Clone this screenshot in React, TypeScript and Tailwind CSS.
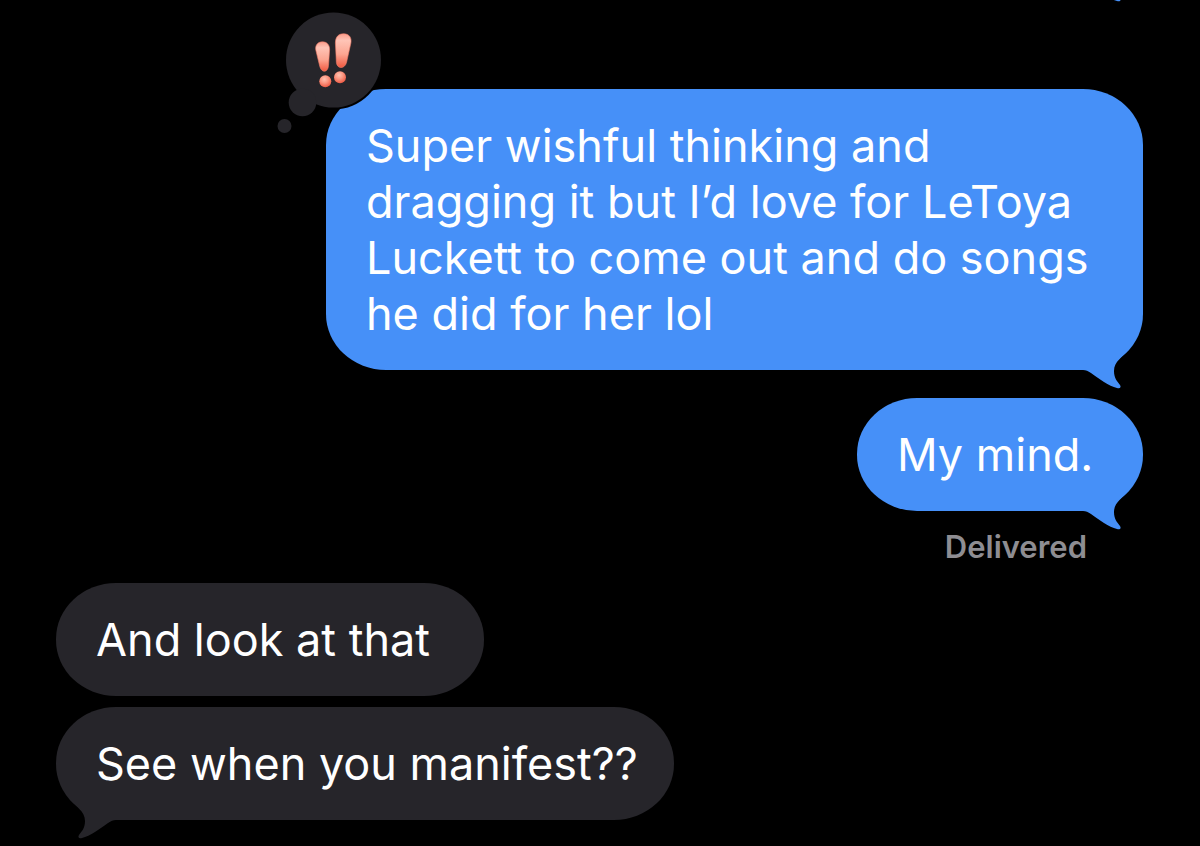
import React from 'react';
import clsx from 'clsx';

type Side = 'sent' | 'received';

interface BubbleProps {
  side: Side;
  tail?: boolean;
  className?: string;
  children: React.ReactNode;
}

const Tail: React.FC<{ side: Side }> = ({ side }) => (
  <svg
    viewBox="0 0 60 40"
    aria-hidden="true"
    className={clsx(
      'absolute -bottom-5 w-[60px] h-10',
      side === 'sent' ? 'right-0 text-[#4690f8]' : 'left-0 -scale-x-100 text-[#26252a]'
    )}
  >
    <path
      fill="currentColor"
      d="M0 0H45.500C40 7 31 11 31 21C31 28 34 31 37 35C38.500 37.500 37 38.800 34 38C26 36 16 29 8 23C5 21 3 20 0 20Z"
    />
  </svg>
);

const Bubble: React.FC<BubbleProps> = ({ side, tail, className, children }) => (
  <div
    className={clsx(
      'relative w-fit max-w-[817px] pl-10 pr-9 pt-[29px] pb-7 rounded-[60px/56px] text-[45px] leading-[56px] text-white',
      side === 'sent' ? 'self-end bg-[#4690f8]' : 'self-start bg-[#26252a]',
      className
    )}
  >
    {tail && <Tail side={side} />}
    {children}
  </div>
);

const Reaction: React.FC = () => (
  <svg
    viewBox="276 10 108 126"
    role="img"
    aria-label="Emphasized"
    className="absolute -left-[50px] -top-[79px] w-[108px] h-[126px]"
  >
    <defs>
      <linearGradient id="mark" x1="0" y1="0" x2="0" y2="1">
        <stop offset="0" stopColor="#fb9c8a" />
        <stop offset="0.2" stopColor="#ffc4b6" />
        <stop offset="0.6" stopColor="#fca692" />
        <stop offset="1" stopColor="#f0583f" />
      </linearGradient>
      <radialGradient id="dot" cx="0.42" cy="0.32" r="0.65">
        <stop offset="0" stopColor="#ffc2b2" />
        <stop offset="0.5" stopColor="#fb9681" />
        <stop offset="1" stopColor="#ee5f49" />
      </radialGradient>
    </defs>
    <circle cx="333.500" cy="60" r="49.500" fill="#000" />
    <g fill="#26252a">
      <circle cx="333.500" cy="60" r="47.500" />
      <circle cx="302.500" cy="102.500" r="13.800" />
      <circle cx="284.500" cy="126" r="7" />
    </g>
    <g fill="url(#mark)" stroke="#f5806b" strokeWidth="0.6">
      <path d="M315.800 50C315 45 318 41.800 322.500 41.800C327 41.800 329.800 45 329.600 50L328.500 65.500C328 73 321.500 73 319.800 66.500Z" />
      <path d="M335.400 43C335.400 36.500 339 33.500 344 33.800C349.500 34 351.800 38 350.900 43L346.500 62.500C344.500 69.500 337 69 336.400 62.500Z" />
    </g>
    <g fill="url(#dot)">
      <circle cx="325.300" cy="81.300" r="6" />
      <circle cx="340" cy="77.300" r="6" />
    </g>
  </svg>
);

export default function App() {
  return (
    <main className="relative min-h-screen overflow-hidden bg-black pl-14 pr-[57px] pb-[26px] font-['Inter','Liberation_Sans',sans-serif]">
      <div className="flex flex-col">
        {/* only the tip of the previous message's tail is in view */}
        <div className="relative -mt-[17px] mb-[106px]">
          <Tail side="sent" />
        </div>

        <Bubble side="sent" tail>
          <Reaction />
          Super wishful thinking and dragging it but I’d love for LeToya Luckett to come out and do songs he did for her lol
        </Bubble>
        <Bubble side="sent" tail className="mt-7 min-w-[286px]">
          My mind.
        </Bubble>
        <p className="self-end mt-4 mr-14 text-[31px] leading-10 font-semibold text-[#8e8d92]">Delivered</p>

        <Bubble side="received" className="mt-4 min-w-[428px]">
          And look at that
        </Bubble>
        <Bubble side="received" tail className="mt-[11px]">
          See when you manifest??
        </Bubble>
      </div>
    </main>
  );
}
